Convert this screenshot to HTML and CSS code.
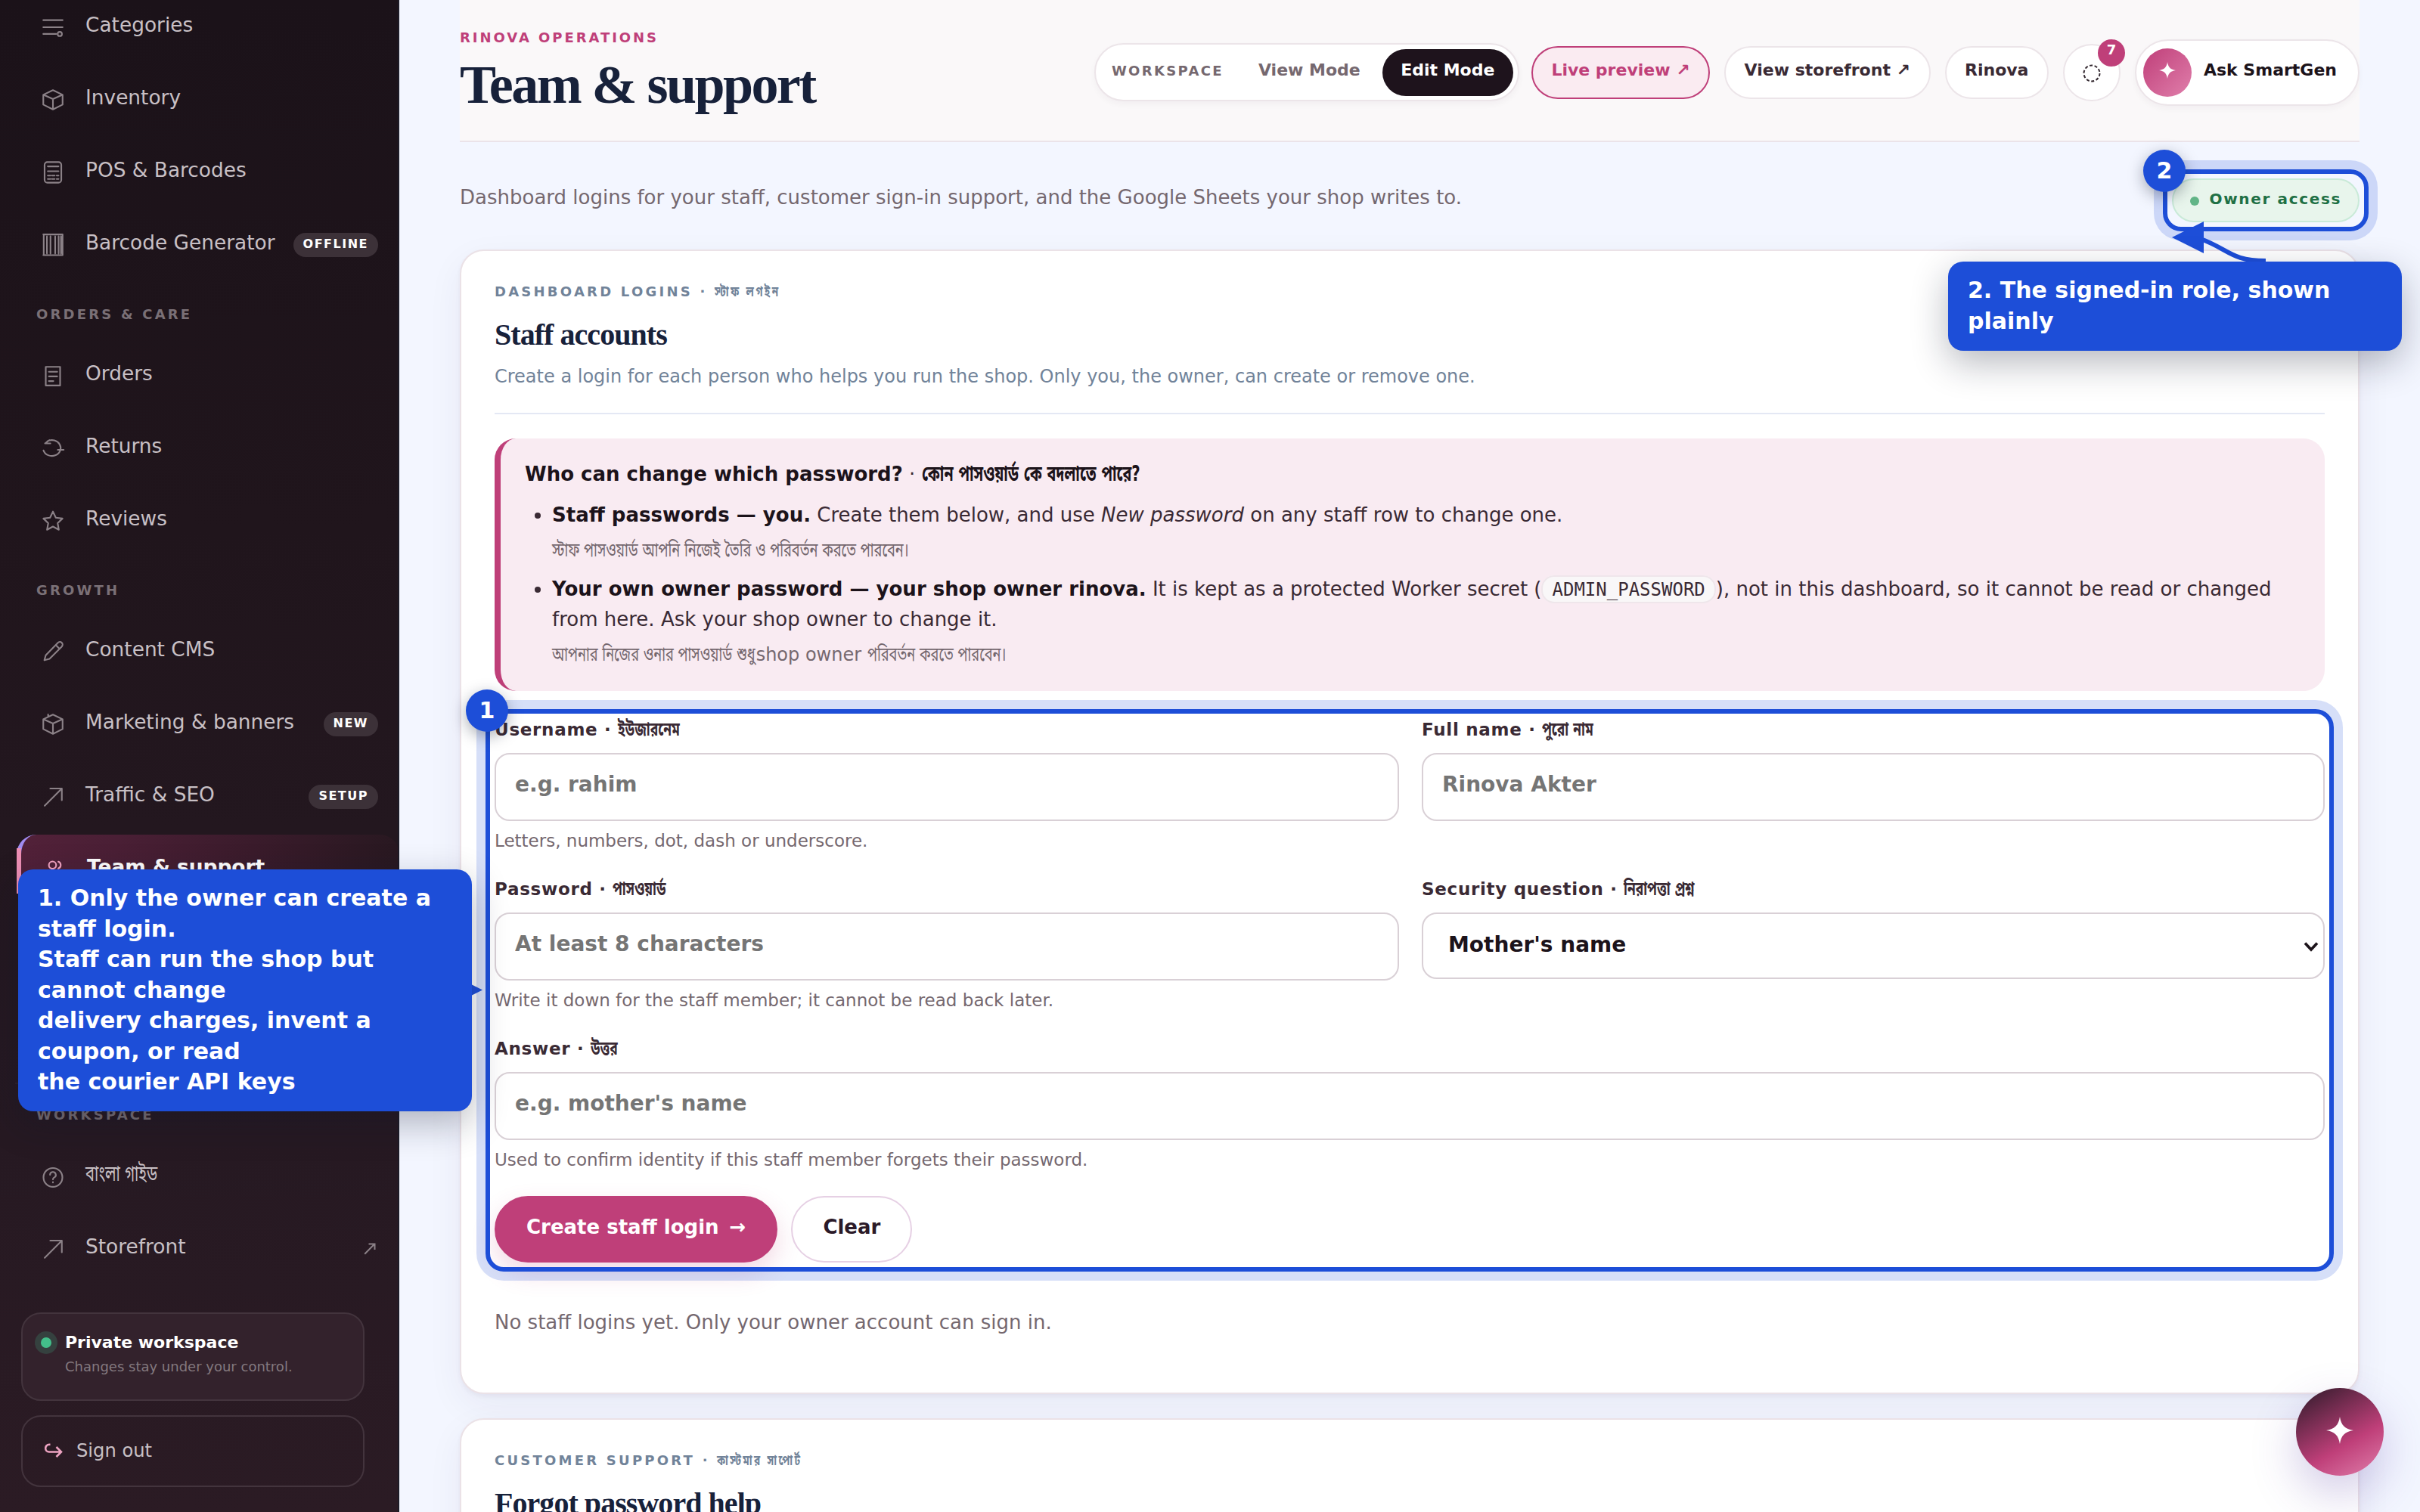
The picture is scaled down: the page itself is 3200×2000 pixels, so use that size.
FILE: index.html
```html
<!DOCTYPE html>
<html lang="en">
<head>
<meta charset="utf-8">
<title>Team &amp; support</title>
<link rel="stylesheet" href="styles.css">
</head>
<body>
<div class="app">
  <aside class="sidebar">
    <nav class="nav">
      <a class="nav-item"><svg class="ico" viewBox="0 0 24 24"><path d="M3 5.4h18M3 12h18M3 18.3h12"/><circle cx="18.4" cy="18.3" r="2"/></svg><span class="label">Categories</span></a>
      <a class="nav-item"><svg class="ico" viewBox="0 0 24 24"><path d="M12 3l9 4.3v9.2L12 21l-9-4.5V7.300zM3 7.300l9 4 9-4M12 11.300V21"/></svg><span class="label">Inventory</span></a>
      <a class="nav-item"><svg class="ico" viewBox="0 0 24 24"><rect x="4.200" y="2.400" width="15.600" height="19.200" rx="2.600"/><path d="M7.200 6.400h10M7.200 10.900h10M7.200 15h2.400M11 15h2.600M15.500 15h1.700M7.200 18.200h2.400M11 18.200h2.600M15.500 18.200h1.700"/></svg><span class="label">POS &amp; Barcodes</span></a>
      <a class="nav-item"><svg class="ico" viewBox="0 0 24 24"><path d="M3 2.200h18M3 21.500h18M3.400 2.200v19.300M6.400 4v16M9.700 4v16M14.100 4v16M17.300 4v16M19.500 4v16M21 2.200v19.300"/></svg><span class="label">Barcode Generator</span><span class="tag">OFFLINE</span></a>

      <h2 class="nav-title">ORDERS &amp; CARE</h2>
      <a class="nav-item"><svg class="ico" viewBox="0 0 24 24"><path d="M5.300 3.700h13.400v17.400H5.300zM8.200 8.300h7.800M8.200 12.600h7.800M8.200 17h4.200"/></svg><span class="label">Orders</span></a>
      <a class="nav-item"><svg class="ico" viewBox="0 0 24 24"><path d="M6.800 5.400A8.200 7.400 0 1 1 3.200 14M4.600 7.400h5M4.600 7.400l4-3M16.500 13.400h5.500"/></svg><span class="label">Returns</span></a>
      <a class="nav-item"><svg class="ico" viewBox="0 0 24 24"><path d="M12 3.300l2.700 5.700 6.200.8-4.500 4.300 1.100 6.200-5.500-3-5.500 3 1.100-6.200-4.500-4.300 6.200-.8z"/></svg><span class="label">Reviews</span></a>

      <h2 class="nav-title">GROWTH</h2>
      <a class="nav-item"><svg class="ico" viewBox="0 0 24 24"><path d="M4 20l1.300-4.700L16.600 3.700a2.500 2.500 0 0 1 3.700 3.500L8.800 18.700zM14.700 5.800l3.500 3.500"/></svg><span class="label">Content CMS</span></a>
      <a class="nav-item"><svg class="ico" viewBox="0 0 24 24"><path d="M12 3l9 4.300v9.200L12 21l-9-4.500V7.300zM3 7.300l9 4 9-4M12 11.300V21M7.500 2.800v2.400"/></svg><span class="label">Marketing &amp; banners</span><span class="tag">NEW</span></a>
      <a class="nav-item"><svg class="ico" viewBox="0 0 24 24"><path d="M4.300 20.300L20.300 4.300M9.500 4.200h10.800v11"/></svg><span class="label">Traffic &amp; SEO</span><span class="tag">SETUP</span></a>
      <a class="nav-item active"><svg class="ico" viewBox="0 0 24 24"><circle cx="10.200" cy="8" r="3.400"/><path d="M15.600 4.800a3.400 3.400 0 0 1 0 6.400M4 20a6.200 6.200 0 0 1 12.400 0M17.500 14.500a6 6 0 0 1 3 5.500"/></svg><span class="label">Team &amp; support</span></a>

      <div class="nav-rule"></div>
      <h2 class="nav-title">WORKSPACE</h2>
      <a class="nav-item"><svg class="ico" viewBox="0 0 24 24"><circle cx="12" cy="13" r="8.800"/><path d="M9.300 10.600a2.700 2.700 0 1 1 4 2.400c-.9.500-1.300 1-1.300 1.900M12 17.300v.5"/></svg><span class="label"><span class="bn">বাংলা গাইড</span></span></a>
      <a class="nav-item"><svg class="ico" viewBox="0 0 24 24"><path d="M4.300 20.300L20.300 4.300M9.500 4.200h10.800v11"/></svg><span class="label">Storefront</span><svg class="ext" viewBox="0 0 16 16"><path d="M1.200 14.800L14 1.800M6.500 1.500H14.500V9"/></svg></a>
    </nav>
    <div class="privacy">
      <i class="pulse"></i>
      <div><strong>Private workspace</strong><small>Changes stay under your control.</small></div>
    </div>
    <button class="signout"><svg viewBox="0 0 24 20"><path d="M7.500 1.800H6A4.300 4.300 0 0 0 6 11.500H21.500M15.500 5l6.500 6.500-6.500 6.500"/></svg><span>Sign out</span></button>
  </aside>

  <main class="main">
    <header class="topbar">
      <div class="heading">
        <p class="eyebrow">RINOVA OPERATIONS</p>
        <h1>Team &amp; support</h1>
      </div>
      <div class="tools">
        <div class="mode"><span class="mode-name">WORKSPACE</span><span class="mode-opt">View Mode</span><span class="mode-opt on">Edit Mode</span></div>
        <a class="pill pink">Live preview ↗</a>
        <a class="pill">View storefront ↗</a>
        <a class="pill">Rinova</a>
        <div class="bell"><svg viewBox="0 0 24 24"><circle cx="12" cy="12" r="10.500"/></svg><b>7</b></div>
        <a class="ask"><span class="orb"><svg viewBox="0 0 24 24"><path d="M12 0c1.100 7.500 4.500 10.900 12 12-7.500 1.100-10.900 4.500-12 12-1.100-7.500-4.500-10.900-12-12 7.500-1.100 10.900-4.500 12-12z"/></svg></span><span class="ask-text">Ask SmartGen</span></a>
      </div>
    </header>

    <div class="intro">
      <p>Dashboard logins for your staff, customer sign-in support, and the Google Sheets your shop writes to.</p>
      <span class="role"><i></i><span>Owner access</span></span>
    </div>

    <section class="card">
      <div class="card-head">
        <p class="kicker">DASHBOARD LOGINS · <span class="bn">স্টাফ লগইন</span></p>
        <h2>Staff accounts</h2>
        <p class="sub">Create a login for each person who helps you run the shop. Only you, the owner, can create or remove one.</p>
      </div>
      <div class="notice">
        <p><b>Who can change which password?</b> · <b class="bn">কোন পাসওয়ার্ড কে বদলাতে পারে?</b></p>
        <ul>
          <li><b>Staff passwords — you.</b> Create them below, and use <em>New password</em> on any staff row to change one.
            <span class="native"><span class="bn">স্টাফ পাসওয়ার্ড আপনি নিজেই তৈরি ও পরিবর্তন করতে পারবেন।</span></span></li>
          <li><b>Your own owner password — your shop owner rinova.</b> It is kept as a protected Worker secret (<code>ADMIN_PASSWORD</code>), not in this dashboard, so it cannot be read or changed from here. Ask your shop owner to change it.
            <span class="native"><span class="bn lead">আপনার নিজের ওনার পাসওয়ার্ড শুধু</span> shop owner <span class="bn">পরিবর্তন করতে পারবেন।</span></span></li>
        </ul>
      </div>
      <form class="form">
        <label class="field"><span class="name">Username · <span class="bn">ইউজারনেম</span></span><input placeholder="e.g. rahim"><span class="hint">Letters, numbers, dot, dash or underscore.</span></label>
        <label class="field"><span class="name">Full name · <span class="bn">পুরো নাম</span></span><input placeholder="Rinova Akter"></label>
        <label class="field"><span class="name">Password · <span class="bn">পাসওয়ার্ড</span></span><input placeholder="At least 8 characters"><span class="hint">Write it down for the staff member; it cannot be read back later.</span></label>
        <label class="field"><span class="name">Security question · <span class="bn">নিরাপত্তা প্রশ্ন</span></span><span class="select"><span>Mother's name</span><svg viewBox="0 0 20 14"><path d="M2 2.500l8 8.500 8-8.500"/></svg></span></label>
        <label class="field wide"><span class="name">Answer · <span class="bn">উত্তর</span></span><input placeholder="e.g. mother's name"><span class="hint">Used to confirm identity if this staff member forgets their password.</span></label>
      </form>
      <div class="actions"><button class="btn primary"><span>Create staff login</span><span class="arrow">→</span></button><button class="btn">Clear</button></div>
      <p class="empty">No staff logins yet. Only your owner account can sign in.</p>
    </section>

    <section class="card">
      <div class="card-head">
        <p class="kicker">CUSTOMER SUPPORT · <span class="bn">কাস্টমার সাপোর্ট</span></p>
        <h2>Forgot password help</h2>
      </div>
    </section>
  </main>
</div>

<button class="fab"><svg viewBox="0 0 24 24"><path d="M12 0c1.100 7.500 4.500 10.900 12 12-7.500 1.100-10.900 4.500-12 12-1.100-7.500-4.500-10.900-12-12 7.500-1.100 10.900-4.500 12-12z"/></svg></button>

<div class="tour">
  <div class="ring ring-1"></div>
  <div class="ring ring-2"></div>
  <svg class="wires" viewBox="0 0 3200 2000"><path class="wire" d="M2910 316C2948 330 2950 345 2996 345"/><path d="M2872 314l42-21v42zM638 1309.500l-42-21v42z"/></svg>
  <span class="num num-1">1</span>
  <span class="num num-2">2</span>
  <div class="note note-1">1. Only the owner can create a staff login.
Staff can run the shop but cannot change
delivery charges, invent a coupon, or read
the courier API keys</div>
  <div class="note note-2">2. The signed-in role, shown plainly</div>
</div>
</body>
</html>
```
FILE: styles.css
```css
* { box-sizing: border-box; margin: 0; }
html, body { height: 2000px; overflow: hidden; }
body {
  font-family: "DejaVu Sans", "Noto Sans Bengali", sans-serif;
  font-size: 26px;
  color: #3a2a34;
  background: #f3f6ff;
}
button, input { font-family: inherit; }
/* Bengali runs are set condensed beside the Latin text */
.bn { display: inline-block; font-size: 1.06em; line-height: 1; white-space: nowrap; transform: scaleX(.713); transform-origin: 0 50%; }
.app { display: flex; height: 2000px; overflow: hidden; }

/* Sidebar */
.sidebar {
  width: 528px;
  flex: none;
  overflow: hidden;
  background: linear-gradient(180deg, #1b1219 0%, #20151c 35%, #261922 75%, #2b1b24 100%);
  border-right: 2px solid #1d1c28;
}
.nav { display: flex; flex-direction: column; gap: 4px; margin: -10px 0 0 20px; }
.nav-item {
  display: flex;
  align-items: center;
  height: 92px;
  padding: 0 26px 0 33px;
  color: #c8c0c5;
}
.ico { width: 34px; height: 34px; flex: none; margin-right: 26px; fill: none; stroke: #8b8187; stroke-width: 1.5; stroke-linecap: round; stroke-linejoin: round; }
.label { flex: 1; font-size: 26.4px; line-height: 40px; padding-bottom: 6px; white-space: nowrap; }
.tag {
  height: 32px;
  padding: 0 13px;
  border-radius: 16px;
  background: #3c3138;
  color: #fff;
  font-size: 16px;
  font-weight: 700;
  line-height: 29px;
  letter-spacing: 1.5px;
}
.nav-title { font-size: 18px; line-height: 24px; letter-spacing: 3.2px; color: #7a7076; margin: 30px 0 19px 28px; }
.active {
  position: relative;
  margin-left: 2px;
  margin-right: -2px;
  border-radius: 26px;
  color: #fff;
  font-weight: 700;
  background: linear-gradient(100deg, #522139 0%, #4a1f35 25%, #3a1b2b 60%, #271820 100%);
  border-left: 6px solid #a08cf0;
  padding-left: 27px;
}
.active::before { content: ""; position: absolute; left: -6px; top: 18px; bottom: 14px; width: 6px; background: #ee8fb5; }
.active .ico { stroke: #f3a3c2; }
.nav-rule { height: 2px; margin: 232px 0 -5px; background: #2d2129; }
.ext { width: 16px; height: 16px; margin-right: 3px; fill: none; stroke: #8b8187; stroke-width: 2; }
.privacy {
  display: flex;
  height: 117px;
  width: 454px;
  margin: 38px 0 0 28px;
  padding: 24px 0 0 24px;
  gap: 18px;
  border: 2px solid #43343d;
  border-radius: 26px;
  background: #33222c;
}
.pulse { width: 14px; height: 14px; margin: 7px 0 0; border-radius: 50%; background: #43bf8a; box-shadow: 0 0 0 8px rgba(67, 191, 138, .2); }
.privacy strong { display: block; color: #fff; font-size: 22px; line-height: 28px; }
.privacy small { display: block; color: #83797f; font-size: 18px; line-height: 28px; margin-top: 4px; }
.signout {
  display: flex;
  align-items: center;
  width: 454px;
  height: 95px;
  margin: 19px 0 0 28px;
  padding: 0 0 1px 29px;
  gap: 18px;
  border: 2px solid #43343d;
  border-radius: 26px;
  background: none;
  color: #c8c0c5;
  font-size: 24.200px;
}
.signout svg { width: 24px; height: 20px; fill: none; stroke: #eda3c1; stroke-width: 2.6; }

/* Main column */
.main { flex: 1; padding: 0 80px; }
.topbar {
  display: flex;
  justify-content: space-between;
  align-items: flex-start;
  height: 188px;
  padding-top: 38px;
  background: #faf8f9;
  border-bottom: 2px solid #ebe3e9;
}
.eyebrow { font-size: 18px; font-weight: 700; line-height: 24px; letter-spacing: 2.950px; color: #bf3f79; }
h1 { margin-top: 10px; font: 700 72px/80px "Liberation Serif", serif; letter-spacing: -2.550px; color: #17213a; }
.tools { display: flex; align-items: center; gap: 19px; height: 87px; margin-top: 14px; font-size: 22px; font-weight: 700; }
.mode { display: flex; align-items: center; height: 77px; margin-right: -3px; padding: 0 6px 0 21px; border: 2px solid #ece5e9; border-radius: 39px; background: #fff; color: #75686f; box-shadow: 0 4px 8px rgba(50, 20, 40, .04); }
.mode-name { font-size: 18px; letter-spacing: 2.35px; padding-bottom: 5px; margin-right: 21px; }
.mode-opt { height: 62px; padding: 0 25px; line-height: 56px; border-radius: 31px; }
.mode-opt.on { margin-left: 4px; padding: 0 24.500px; background: #1e131c; color: #fff; }
.pill { height: 70px; padding: 0 24.500px; line-height: 60px; border: 2px solid #ece5e9; border-radius: 35px; background: #fff; }
.pill.pink { color: #bf3f79; border-color: #bf3f79; background: #faebf1; }
.bell { position: relative; display: grid; place-items: center; width: 76px; height: 76px; border: 2px solid #ece5e9; border-radius: 50%; background: #fff; }
.bell svg { width: 24px; height: 24px; margin-top: 2px; fill: none; stroke: #33282f; stroke-width: 2; stroke-dasharray: 4 2.6; }
.bell b { position: absolute; right: -8px; top: -8px; width: 36px; height: 36px; border-radius: 50%; background: #bf3f79; color: #fff; text-align: center; font-size: 18px; line-height: 28px; }
.ask { display: flex; align-items: center; height: 88px; padding: 0 28px 0 9px; gap: 16px; border: 2px solid #ece5e9; border-radius: 44px; background: #fff; color: #1c131a; box-shadow: 0 4px 8px rgba(50, 20, 40, .04); }
.ask-text { padding-bottom: 6px; }
.orb { display: grid; place-items: center; width: 64px; height: 64px; border-radius: 50%; background: linear-gradient(135deg, #bf3f79, #e07fab); }
.orb svg { width: 22px; height: 22px; margin-bottom: 5px; fill: #fff; }

.intro { display: flex; justify-content: space-between; align-items: center; margin: 48px 0 36px; height: 58px; }
.intro p { color: #75686f; line-height: 40px; padding-bottom: 8px; }
.role { display: flex; align-items: center; height: 58px; padding: 0 22px; gap: 14px; border: 2px solid #c9ead8; border-radius: 29px; background: #e8f5ec; color: #1f7045; font-size: 20px; font-weight: 700; letter-spacing: 1.65px; }
.role i { width: 12px; height: 12px; margin-top: 2px; border-radius: 50%; background: #62b587; }
.role span { padding-bottom: 4px; }

.card {
  margin-bottom: 32px;
  padding: 39px 44px 71px;
  border: 2px solid #ebe2e7;
  border-radius: 32px;
  background: #fff;
  box-shadow: 0 3px 6px rgba(50, 20, 50, .05), 0 16px 48px rgba(50, 40, 90, .06);
}
.card-head { padding-bottom: 30px; border-bottom: 2px solid #e4e8f4; }
.kicker { height: 30px; font-size: 18px; font-weight: 700; line-height: 30px; letter-spacing: 3.24px; color: #718399; white-space: nowrap; }
.card h2 { margin-top: 18px; font: 700 40px/48px "Liberation Serif", serif; letter-spacing: -.95px; color: #17213a; }
.sub { margin-top: 13px; font-size: 24px; line-height: 36px; color: #718399; }

.notice { margin-top: 32px; padding: 27px 32px 29px; border-left: 8px solid #bf3f79; border-radius: 28px; background: #f9ebf2; line-height: 40px; }
.notice p { height: 40px; }
.notice b { color: #1c131a; }
.notice ul { margin: 14px 0 0; padding-left: 36px; }
.notice li + li { margin-top: 12px; }
.native { display: block; height: 38px; margin-top: 8px; font-size: 24px; line-height: 38px; color: #75686f; }
.lead { width: 262px; }
code { font: 24px/1 "DejaVu Sans Mono", monospace; padding: 3px 12px 2px; border: 2px solid #efe6eb; border-radius: 17px; background: #f9f7f8; }

.form { display: grid; grid-template-columns: 1196px 1fr; gap: 32px 30px; margin-top: 35px; }
.field { display: flex; flex-direction: column; }
.wide { grid-column: 1 / -1; }
.name { height: 32px; font-size: 23px; font-weight: 700; line-height: 32px; letter-spacing: .7px; margin-bottom: 15px; }
.name .bn { letter-spacing: 0; }
input, .select { height: 90px; padding: 0 25px 7px; border: 2px solid #d9d0d6; border-radius: 20px; background: #fff; font-size: 28px; font-weight: 700; }
input::placeholder { color: #757575; opacity: 1; }
.select { display: flex; justify-content: space-between; align-items: center; height: 88px; padding: 0 6px 4px 33px; color: #1c131a; }
.select svg { width: 20px; height: 14px; margin-top: 6px; fill: none; stroke: #1c131a; stroke-width: 3.600; }
.hint { margin-top: 10px; font-size: 23px; line-height: 32px; color: #75686f; }

.actions { display: flex; gap: 18px; margin-top: 32px; }
.btn { height: 88px; padding: 0 40px 6px; border: 2px solid #e6d0e4; border-radius: 44px; background: #fff; color: #2b1a28; font-size: 26px; font-weight: 700; }
.primary { display: flex; align-items: center; gap: 14px; border-color: #bf3f79; background: #bf3f79; color: #fff; box-shadow: 0 14px 32px rgba(191, 63, 121, .2); }
.empty { margin-top: 57px; line-height: 44px; color: #75686f; }

.fab { position: absolute; left: 3036px; top: 1836px; display: grid; place-items: center; width: 116px; height: 116px; padding: 0 0 4px; border: 0; border-radius: 50%; background: linear-gradient(150deg, #2b1a28 0%, #bf3f79 62%, #e07fab 100%); box-shadow: 0 24px 60px rgba(80, 50, 160, .25); }
.fab svg { width: 36px; height: 36px; fill: #fff; }

/* Guided tour overlay */
.tour { position: absolute; inset: 0; width: 3200px; height: 2000px; overflow: hidden; color: #fff; font-weight: 700; font-size: 30px; }
.ring { position: absolute; border: 6px solid #1d4ed8; border-radius: 24px; box-shadow: 0 0 0 12px rgba(29, 78, 216, .18); }
.ring-1 { left: 642px; top: 938px; width: 2444px; height: 744px; }
.ring-2 { left: 2860px; top: 224px; width: 272px; height: 82px; }
.wires { position: absolute; inset: 0; width: 3200px; height: 2000px; fill: #1d4ed8; }
.wire { fill: none; stroke: #1d4ed8; stroke-width: 6; }
.num { position: absolute; width: 56px; height: 56px; border-radius: 50%; background: #1d4ed8; text-align: center; line-height: 56px; font-size: 30px; box-shadow: 0 6px 20px rgba(15, 23, 42, .35); }
.num-1 { left: 616px; top: 912px; }
.num-2 { left: 2834px; top: 198px; }
.note { position: absolute; width: 600px; padding: 18px 26px; border-radius: 20px; background: #1d4ed8; line-height: 40.500px; white-space: pre-line; box-shadow: 0 16px 48px rgba(15, 23, 42, .3); }
.note-1 { left: 24px; top: 1150px; }
.note-2 { left: 2576px; top: 346px; padding-bottom: 19px; }
```
